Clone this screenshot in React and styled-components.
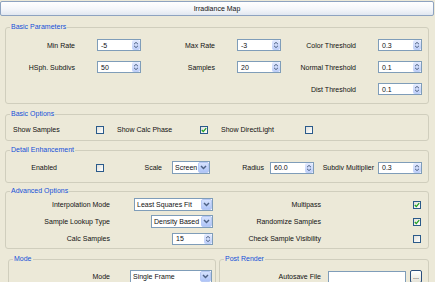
import React from "react";
import styled, { createGlobalStyle } from "styled-components";

const GlobalStyle = createGlobalStyle`
	html, body {
		margin: 0;
		padding: 0;
		background: #ece9d8;
	}
	body {
		font-family: "Liberation Sans", Arial, sans-serif;
		font-size: 7px;
		color: #111;
	}
`;

const Root = styled.div`
	width: 435px;
	height: 282px;
	overflow: hidden;
	padding-top: 1px;
	box-sizing: border-box;
`;

const TitleBar = styled.div`
	height: 15px;
	box-sizing: border-box;
	margin-right: 1px;
	border: 1px solid #8ea3c0;
	border-radius: 2px;
	background: linear-gradient(#ffffff, #f4f6fa 55%, #e1e7f0);
	display: flex;
	align-items: center;
	justify-content: center;
	font-size: 7px;
`;

const Group = styled.fieldset`
	box-sizing: border-box;
	margin: ${(p) => p.$mt || 0}px 6px 0 5px;
	padding: ${(p) => p.$pt}px 4px ${(p) => p.$pb}px 4px;
	border: 1px solid #d0cebd;
	border-radius: 3px;
	min-width: 0;
`;

const Legend = styled.legend`
	padding: 0 1px;
	color: #1550d8;
	font-size: 7px;
	line-height: 8px;
`;

const Grid = styled.div`
	display: grid;
	grid-template-columns: ${(p) => p.$cols};
	grid-auto-rows: ${(p) => p.$row}px;
	row-gap: ${(p) => p.$gap || 0}px;
	align-items: center;
`;

const Label = styled.span`
	white-space: nowrap;
	text-align: ${(p) => p.$align || "right"};
	padding-right: ${(p) => p.$pr || 0}px;
	padding-left: ${(p) => p.$pl || 0}px;
`;

const Cell = styled.div`
	display: flex;
	justify-content: flex-end;
	padding-right: ${(p) => p.$pr || 0}px;
`;

const SpinBox = styled.div`
	width: ${(p) => p.$w || 44}px;
	height: 12px;
	box-sizing: border-box;
	border: 1px solid #7f9db9;
	background: #fff;
	display: flex;
	align-items: center;
	justify-content: space-between;
	padding-left: 3px;
`;

const SpinButtons = styled.div`
	width: 8px;
	height: 10px;
	border-radius: 2px;
	background: linear-gradient(#e3eafe, #bccdf8);
	display: flex;
	align-items: center;
	justify-content: center;
`;

const SelectBox = styled.div`
	width: ${(p) => p.$w}px;
	height: 13px;
	box-sizing: border-box;
	border: 1px solid #7f9db9;
	background: #fff;
	display: flex;
	align-items: center;
	justify-content: space-between;
	padding-left: 2px;
	white-space: nowrap;
`;

const SelectButton = styled.div`
	width: 11px;
	height: 11px;
	box-sizing: border-box;
	border: 1px solid #b7c9f4;
	border-radius: 2px;
	background: linear-gradient(#d6e2fd, #aec4f7);
	display: flex;
	align-items: center;
	justify-content: center;
`;

const CheckBox = styled.span`
	display: inline-flex;
	align-items: center;
	justify-content: center;
	width: 8px;
	height: 8px;
	box-sizing: border-box;
	border: 1px solid #2a5a8a;
	background: linear-gradient(135deg, #e0e0da, #ffffff);
`;

const TextField = styled.div`
	width: 78px;
	height: 12px;
	box-sizing: border-box;
	border: 1px solid #7f9db9;
	background: #fff;
`;

const DotsButton = styled.div`
	width: 12px;
	height: 13px;
	box-sizing: border-box;
	border: 1px solid #2c4f7c;
	border-radius: 2px;
	background: linear-gradient(#ffffff, #e6e4d8);
	display: flex;
	align-items: flex-end;
	justify-content: center;
	padding-bottom: 2px;
	font-size: 7px;
	line-height: 6px;
`;

const OptionRow = styled.div`
	display: flex;
	align-items: center;
	height: 9px;
	padding-left: 3px;
	gap: 13px;
`;

const Option = styled.div`
	display: flex;
	align-items: center;
`;

const OptionLabel = styled.span`
	width: ${(p) => p.$w || 83}px;
	white-space: nowrap;
`;

const BottomRow = styled.div`
	display: flex;
	gap: 3px;
	margin-top: 6px;
	padding: 0 6px 0 8px;
`;

const SideGroup = styled(Group)`
	margin: 0;
	flex: ${(p) => (p.$w ? `0 0 ${p.$w}px` : "1 1 0")};
`;

function Spinner({ value, w }) {
	return (
		<SpinBox $w={w}>
			<span>{value}</span>
			<SpinButtons>
				<svg width="6" height="8" viewBox="0 0 6 8">
					<path d="M1 3.2 L3 1.4 L5 3.2" fill="none" stroke="#4d6185" strokeWidth="1" />
					<path d="M1 4.8 L3 6.6 L5 4.8" fill="none" stroke="#4d6185" strokeWidth="1" />
				</svg>
			</SpinButtons>
		</SpinBox>
	);
}

function Select({ value, w }) {
	return (
		<SelectBox $w={w}>
			<span>{value}</span>
			<SelectButton>
				<svg width="7" height="5" viewBox="0 0 7 5">
					<path d="M1 1 L3.5 3.6 L6 1" fill="none" stroke="#4d6185" strokeWidth="1.4" />
				</svg>
			</SelectButton>
		</SelectBox>
	);
}

function Check({ checked }) {
	return (
		<CheckBox>
			{checked && (
				<svg width="6" height="6" viewBox="0 0 6 6">
					<path d="M0.8 3 L2.3 4.6 L5.2 1.2" fill="none" stroke="#21a121" strokeWidth="1.3" />
				</svg>
			)}
		</CheckBox>
	);
}

const basicParams = [
	["Min Rate", "-5", "Max Rate", "-3", "Color Threshold", "0.3"],
	["HSph. Subdivs", "50", "Samples", "20", "Normal Threshold", "0.1"],
	[null, null, null, null, "Dist Threshold", "0.1"],
];

export default function App() {
	return (
		<Root>
			<GlobalStyle />
			<TitleBar>Irradiance Map</TitleBar>

			<Group $mt={7} $pt={7} $pb={7}>
				<Legend>Basic Parameters</Legend>
				<Grid $cols="87px 44px 96px 44px 97px 44px" $row={14} $gap={8}>
					{basicParams.map((row, i) =>
						row.map((item, j) =>
							j % 2 === 0 ? (
								<Label key={`${i}-${j}`} $pr={22}>
									{item}
								</Label>
							) : item ? (
								<Spinner key={`${i}-${j}`} value={item} />
							) : (
								<span key={`${i}-${j}`} />
							)
						)
					)}
				</Grid>
			</Group>

			<Group $mt={6} $pt={7} $pb={6}>
				<Legend>Basic Options</Legend>
				<OptionRow>
					<Option>
						<OptionLabel>Show Samples</OptionLabel>
						<Check />
					</Option>
					<Option>
						<OptionLabel>Show Calc Phase</OptionLabel>
						<Check checked />
					</Option>
					<Option>
						<OptionLabel $w={84}>Show DirectLight</OptionLabel>
						<Check />
					</Option>
				</OptionRow>
			</Group>

			<Group $mt={5} $pt={7} $pb={8}>
				<Legend>Detail Enhancement</Legend>
				<Grid $cols="86px 8px 68px 38px 60px 44px 64px 44px" $row={13}>
					<Label $pr={39}>Enabled</Label>
					<Check />
					<Label $pr={10}>Scale</Label>
					<Select value="Screen" w={38} />
					<Label $pr={6}>Radius</Label>
					<Spinner value="60.0" />
					<Label $pr={4}>Subdiv Multiplier</Label>
					<Spinner value="0.3" />
				</Grid>
			</Group>

			<Group $mt={4} $pt={3} $pb={3}>
				<Legend>Advanced Options</Legend>
				<Grid $cols="100px 105px 106px 101px" $row={13} $gap={4}>
					<Label>Interpolation Mode</Label>
					<Cell $pr={2}>
						<Select value="Least Squares Fit" w={79} />
					</Cell>
					<Label>Multipass</Label>
					<Cell $pr={1}>
						<Check checked />
					</Cell>

					<Label>Sample Lookup Type</Label>
					<Cell $pr={2}>
						<Select value="Density Based" w={62} />
					</Cell>
					<Label>Randomize Samples</Label>
					<Cell $pr={1}>
						<Check checked />
					</Cell>

					<Label>Calc Samples</Label>
					<Cell $pr={2}>
						<Spinner value="15" w={41} />
					</Cell>
					<Label>Check Sample Visibility</Label>
					<Cell $pr={1}>
						<Check />
					</Cell>
				</Grid>
			</Group>

			<BottomRow>
				<SideGroup $w={208} $pt={7} $pb={4}>
					<Legend>Mode</Legend>
					<Grid $cols="117px 1fr" $row={13}>
						<Label $pr={20}>Mode</Label>
						<Select value="Single Frame" w={82} />
					</Grid>
				</SideGroup>
				<SideGroup $pt={7} $pb={4}>
					<Legend>Post Render</Legend>
					<Grid $cols="104px 82px 12px" $row={13}>
						<Label $pr={7}>Autosave File</Label>
						<TextField />
						<DotsButton>...</DotsButton>
					</Grid>
				</SideGroup>
			</BottomRow>
		</Root>
	);
}
